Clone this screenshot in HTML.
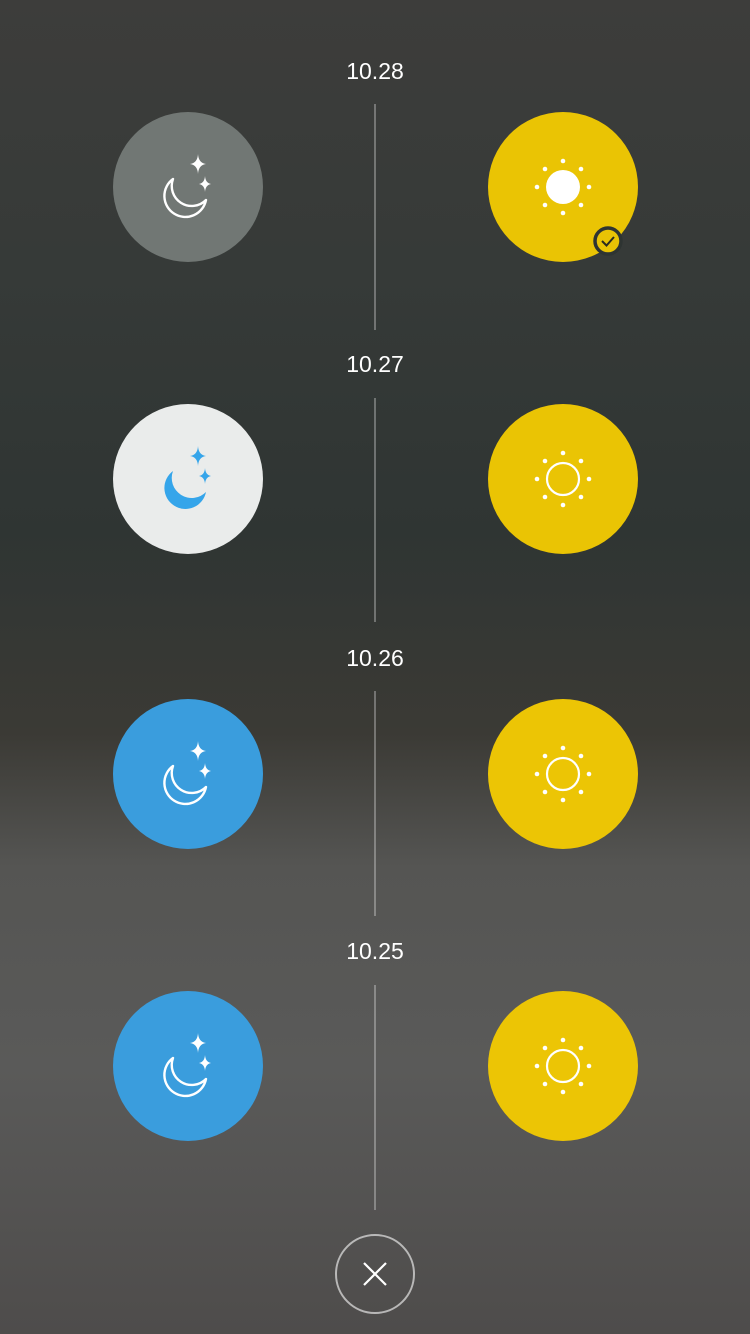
<!DOCTYPE html>
<html><head><meta charset="utf-8"><style>
html,body{margin:0;padding:0}
body{width:750px;height:1334px;overflow:hidden;position:relative;font-family:"Liberation Sans",sans-serif;
background:linear-gradient(180deg,#3d3d3b 0%,#363a38 20%,#2f3533 40%,#3b3a35 55%,#555553 65%,#5a5a59 80%,#4e4c4b 100%);}
.lbl{position:absolute;left:0;width:750px;text-align:center;color:#fff;font-size:23px}
.line{position:absolute;left:374px;width:2px;background:rgba(255,255,255,0.3)}
svg{position:absolute;left:0;top:0}
</style></head><body>
<div class="lbl" style="top:58px">10.28</div>
<div class="lbl" style="top:351px">10.27</div>
<div class="lbl" style="top:645px">10.26</div>
<div class="lbl" style="top:938px">10.25</div>
<div class="line" style="top:104px;height:226px"></div>
<div class="line" style="top:398px;height:224px"></div>
<div class="line" style="top:691px;height:225px"></div>
<div class="line" style="top:985px;height:225px"></div>

<svg width="750" height="1334" viewBox="0 0 750 1334">
<defs>
<path id="moonP" d="M-15 -8 A21 21 0 1 0 18 13 A20 20 0 0 1 -15 -8 Z"/>
<g id="moonO" fill="none" stroke="#fff" stroke-width="2.4" stroke-linejoin="round">
<use href="#moonP"/>
</g>
<g id="stars">
<path d="M10 -33 Q10.5 -24 18 -23 Q10.5 -22 10 -13 Q9.5 -22 2 -23 Q9.5 -24 10 -33 Z"/>
<path d="M17 -11 Q17.5 -4 23 -3 Q17.5 -2 17 5 Q16.5 -2 11 -3 Q16.5 -4 17 -11 Z"/>
</g>
<g id="dots" fill="#fff">
<circle cx="0" cy="-26" r="2.3"/><circle cx="0" cy="26" r="2.3"/>
<circle cx="-26" cy="0" r="2.3"/><circle cx="26" cy="0" r="2.3"/>
<circle cx="-18" cy="-18" r="2.3"/><circle cx="18" cy="-18" r="2.3"/>
<circle cx="-18" cy="18" r="2.3"/><circle cx="18" cy="18" r="2.3"/>
</g>
</defs>
<circle cx="188" cy="187" r="75" fill="#717774"/>
<g transform="translate(188,187)"><use href="#moonO"/><use href="#stars" fill="#fff"/></g>
<circle cx="563" cy="187" r="75" fill="#eac404"/>
<g transform="translate(563,187)"><use href="#dots"/><circle r="17" fill="#fff"/></g>
<circle cx="608" cy="241" r="13" fill="#e9c305" stroke="#2e3432" stroke-width="3.5"/>
<path d="M602 241 L606.5 245.5 L614 237" fill="none" stroke="#2a2a20" stroke-width="2"/>
<circle cx="188" cy="479" r="75" fill="#eaeceb"/>
<g transform="translate(188,479)"><use href="#moonP" fill="#35a5ea"/><use href="#stars" fill="#35a5ea"/></g>
<circle cx="563" cy="479" r="75" fill="#eac404"/>
<g transform="translate(563,479)"><use href="#dots"/><circle r="16" fill="none" stroke="#fff" stroke-width="2.2"/></g>
<circle cx="188" cy="774" r="75" fill="#3a9ddd"/>
<g transform="translate(188,774)"><use href="#moonO"/><use href="#stars" fill="#fff"/></g>
<circle cx="563" cy="774" r="75" fill="#ecc505"/>
<g transform="translate(563,774)"><use href="#dots"/><circle r="16" fill="none" stroke="#fff" stroke-width="2.2"/></g>
<circle cx="188" cy="1066" r="75" fill="#3a9ddd"/>
<g transform="translate(188,1066)"><use href="#moonO"/><use href="#stars" fill="#fff"/></g>
<circle cx="563" cy="1066" r="75" fill="#ecc505"/>
<g transform="translate(563,1066)"><use href="#dots"/><circle r="16" fill="none" stroke="#fff" stroke-width="2.2"/></g>
<circle cx="375" cy="1274" r="39" fill="none" stroke="rgba(255,255,255,0.6)" stroke-width="2"/>
<path d="M364 1263 L386 1285 M386 1263 L364 1285" stroke="#fff" stroke-width="2.2"/>
</svg>
</body></html>
